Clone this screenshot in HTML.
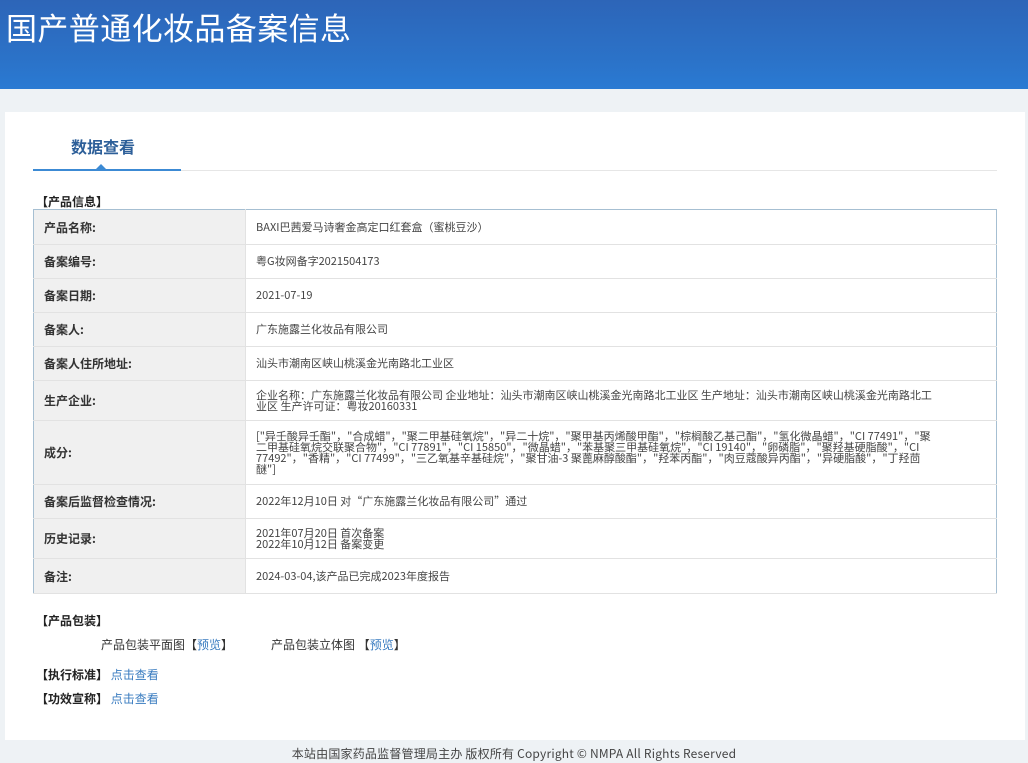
<!DOCTYPE html>
<html><head><meta charset="utf-8"><style>
*{margin:0;padding:0;box-sizing:border-box}
body{width:1028px;height:763px;background:#eef2f5;font-family:"Liberation Sans","Noto Sans CJK SC",sans-serif;font-size:12px;color:#444;position:relative;overflow:hidden}
.hd{position:absolute;left:0;top:0;width:1028px;height:89px;background:linear-gradient(180deg,#2d65b8 0%,#2b73c9 70%,#2a7ad3 100%)}
.hd h1{position:absolute;left:6px;top:4px;font-size:31px;font-weight:normal;color:#fff;letter-spacing:0.4px;font-family:"Noto Sans CJK SC",sans-serif}
.card{position:absolute;left:5px;top:112px;width:1020px;height:628px;background:#fff}
.tab{position:absolute;left:71px;top:134px;font-size:16px;font-weight:bold;color:#2d5f99;font-family:"Noto Sans CJK SC",sans-serif}
.ln{position:absolute;left:33px;top:170px;width:964px;height:1px;background:#e6e6e6}
.lnb{position:absolute;left:33px;top:169px;width:148px;height:2px;background:#3c8ad4}
.tri{position:absolute;left:96px;top:164px;width:0;height:0;border-left:5px solid transparent;border-right:5px solid transparent;border-bottom:5px solid #3c8ad4}
.sec{position:absolute;left:36px;font-weight:bold;color:#222;font-family:"Noto Sans CJK SC",sans-serif;font-size:12px}
table{position:absolute;left:33px;top:209px;width:964px;border-collapse:collapse;border:1px solid #a6bfd2}
td{border-bottom:1px solid #e2e2e2;vertical-align:middle;font-family:"Noto Sans CJK SC",sans-serif;font-size:11px;line-height:11px;color:#444}
td.l{width:212px;background:#f0f0f0;font-weight:bold;font-size:12px;color:#333;padding-left:10px;border-right:1px solid #e2e2e2}
td.v{padding:0 52px 0 10px}
td.w{padding-right:58px}
a{color:#3a7cc0;text-decoration:none}
.t{position:absolute;font-family:"Noto Sans CJK SC",sans-serif;font-size:12px;color:#333}
.ft{position:absolute;top:745px;left:0;width:1028px;text-align:center;font-size:12px;color:#444;font-family:"Noto Sans CJK SC",sans-serif;letter-spacing:0.2px}
</style></head><body>
<div class="hd"><h1>国产普通化妆品备案信息</h1></div>
<div class="card"></div>
<div class="tab">数据查看</div>
<div class="ln"></div><div class="lnb"></div><div class="tri"></div>
<div class="sec" style="top:193px">【产品信息】</div>
<table>
<tr style="height:35px"><td class="l">产品名称:</td><td class="v">BAXI巴茜爱马诗奢金高定口红套盒（蜜桃豆沙）</td></tr>
<tr style="height:34px"><td class="l">备案编号:</td><td class="v">粤G妆网备字2021504173</td></tr>
<tr style="height:34px"><td class="l">备案日期:</td><td class="v">2021-07-19</td></tr>
<tr style="height:34px"><td class="l">备案人:</td><td class="v">广东施露兰化妆品有限公司</td></tr>
<tr style="height:34px"><td class="l">备案人住所地址:</td><td class="v">汕头市潮南区峡山桃溪金光南路北工业区</td></tr>
<tr style="height:40px"><td class="l">生产企业:</td><td class="v w">企业名称：广东施露兰化妆品有限公司 企业地址：汕头市潮南区峡山桃溪金光南路北工业区 生产地址：汕头市潮南区峡山桃溪金光南路北工业区 生产许可证：粤妆20160331</td></tr>
<tr style="height:64px"><td class="l">成分:</td><td class="v w">["异壬酸异壬酯"，"合成蜡"，"聚二甲基硅氧烷"，"异二十烷"，"聚甲基丙烯酸甲酯"，"棕榈酸乙基己酯"，"氢化微晶蜡"，"CI 77491"，"聚二甲基硅氧烷交联聚合物"，"CI 77891"，"CI 15850"，"微晶蜡"，"苯基聚三甲基硅氧烷"，"CI 19140"，"卵磷脂"，"聚羟基硬脂酸"，"CI 77492"，"香精"，"CI 77499"，"三乙氧基辛基硅烷"，"聚甘油-3 聚蓖麻醇酸酯"，"羟苯丙酯"，"肉豆蔻酸异丙酯"，"异硬脂酸"，"丁羟茴醚"]</td></tr>
<tr style="height:34px"><td class="l">备案后监督检查情况:</td><td class="v">2022年12月10日 对“广东施露兰化妆品有限公司”通过</td></tr>
<tr style="height:40px"><td class="l">历史记录:</td><td class="v">2021年07月20日 首次备案<br>2022年10月12日 备案变更</td></tr>
<tr style="height:35px"><td class="l">备注:</td><td class="v">2024-03-04,该产品已完成2023年度报告</td></tr>
</table>
<div class="sec" style="top:612px">【产品包装】</div>
<div class="t" style="left:101px;top:636px">产品包装平面图【<a>预览</a>】</div>
<div class="t" style="left:271px;top:636px">产品包装立体图 【<a>预览</a>】</div>
<div class="sec" style="top:666px">【执行标准】 <a style="font-weight:normal">点击查看</a></div>
<div class="sec" style="top:690px">【功效宣称】 <a style="font-weight:normal">点击查看</a></div>
<div class="ft">本站由国家药品监督管理局主办 版权所有 Copyright © NMPA All Rights Reserved</div>
</body></html>
